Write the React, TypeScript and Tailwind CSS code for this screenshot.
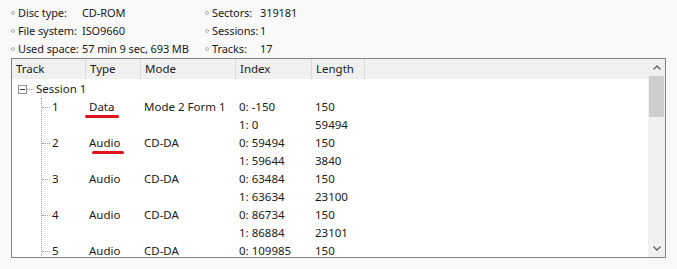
import React from 'react';

const info = [
    [['Disc type:', 'CD-ROM'], ['Sectors:', '319181']],
    [['File system:', 'ISO9660'], ['Sessions:', '1']],
    [['Used space:', '57 min 9 sec, 693 MB'], ['Tracks:', '17']],
];

type Row = { track?: string; type?: string; mode?: string; index: string; length: string; mark?: 'data' | 'audio' };

const rows: Row[] = [
    { track: '1', type: 'Data', mode: 'Mode 2 Form 1', index: '0: -150', length: '150', mark: 'data' },
    { index: '1: 0', length: '59494' },
    { track: '2', type: 'Audio', mode: 'CD-DA', index: '0: 59494', length: '150', mark: 'audio' },
    { index: '1: 59644', length: '3840' },
    { track: '3', type: 'Audio', mode: 'CD-DA', index: '0: 63484', length: '150' },
    { index: '1: 63634', length: '23100' },
    { track: '4', type: 'Audio', mode: 'CD-DA', index: '0: 86734', length: '150' },
    { index: '1: 86884', length: '23101' },
    { track: '5', type: 'Audio', mode: 'CD-DA', index: '0: 109985', length: '150' },
];

const cols = 'grid grid-cols-[74px_55px_95px_76px_53px_1fr]';

function Bullet() {
    return <span className="inline-block w-[4px] h-[4px] rounded-full border border-[#b0b0b0] mr-[3px] mb-[1px] shrink-0" />;
}

export default function App() {
    return (
        <div className="w-[677px] h-[269px] bg-[#f9f9f9] text-[11.5px] leading-[18px] text-[#1a1a1a] overflow-hidden whitespace-nowrap" style={{ fontFamily: '"Noto Sans", "Open Sans", sans-serif' }}>
            <div className="pt-[4px] pl-[11px] text-[11px] tracking-[-0.1px]">
                {info.map((r, i) => (
                    <div key={i} className="flex h-[18px] items-center">
                        <div className="w-[194px] flex items-center">
                            <Bullet />
                            <span className="w-[64px]">{r[0][0]}</span>
                            <span>{r[0][1]}</span>
                        </div>
                        <div className="flex items-center">
                            <Bullet />
                            <span className="w-[48px]">{r[1][0]}</span>
                            <span>{r[1][1]}</span>
                        </div>
                    </div>
                ))}
            </div>

            {/* lista de pistas */}
            <div className="ml-[11px] w-[655px] h-[200px] border border-[#828282] bg-white flex">
                <div className="flex-1 flex flex-col overflow-hidden">
                    <div className={`${cols} h-[20px] shrink-0 bg-[#f0f0f0] items-center`}>
                        {['Track', 'Type', 'Mode', 'Index', 'Length'].map((h) => (
                            <div key={h} className="h-full flex items-center pl-[4px] border-r border-[#d9d9d9] bg-[#f0f0f0]">{h}</div>
                        ))}
                        <div />
                    </div>
                    <div className="relative pt-[1px] flex-1 overflow-hidden">
                        <div className="h-[18px] flex items-center pl-[6px]">
                            <span className="w-[9px] h-[9px] border border-[#919191] bg-white flex items-center justify-center">
                                <span className="w-[5px] h-px bg-[#333]" />
                            </span>
                            <span className="w-[7px] border-t border-dotted border-[#a0a0a0]" />
                            <span className="ml-[2px]">Session 1</span>
                        </div>
                        {/* linea del arbol */}
                        <div className="absolute left-[29px] top-[19px] h-[170px] border-l border-dotted border-[#a0a0a0]" />
                        {rows.map((r, i) => (
                            <div key={i} className={`${cols} h-[18px] items-center`}>
                                <div className="flex items-center pl-[30px]">
                                    {r.track && <span className="w-[8px] border-t border-dotted border-[#a0a0a0]" />}
                                    <span className="ml-[2px]">{r.track}</span>
                                </div>
                                <div className="pl-[3px] relative">
                                    {r.type}
                                    {r.mark === 'data' && <span className="absolute left-[-1px] top-[17px] w-[34px] h-[3px] rounded-full bg-[#e0141c]" />}
                                    {r.mark === 'audio' && <span className="absolute left-[6px] top-[17px] w-[32px] h-[3px] rounded-full bg-[#e0141c]" />}
                                </div>
                                <div className="pl-[3px]">{r.mode}</div>
                                <div className="pl-[3px]">{r.index}</div>
                                <div className="pl-[3px]">{r.length}</div>
                                <div />
                            </div>
                        ))}
                    </div>
                </div>
                {/* scrollbar */}
                <div className="w-[17px] bg-[#f0f0f0] flex flex-col">
                    <div className="h-[17px] flex items-center justify-center text-[#606060]">
                        <svg width="8" height="5" viewBox="0 0 8 5"><path d="M0.5 4.5 L4 1 L7.5 4.5" fill="none" stroke="currentColor" strokeWidth="1.3" /></svg>
                    </div>
                    <div className="mx-[1px] h-[41px] bg-[#cdcdcd]" />
                    <div className="flex-1" />
                    <div className="h-[17px] flex items-center justify-center text-[#606060]">
                        <svg width="8" height="5" viewBox="0 0 8 5"><path d="M0.5 0.5 L4 4 L7.5 0.5" fill="none" stroke="currentColor" strokeWidth="1.3" /></svg>
                    </div>
                </div>
            </div>
        </div>
    );
}
